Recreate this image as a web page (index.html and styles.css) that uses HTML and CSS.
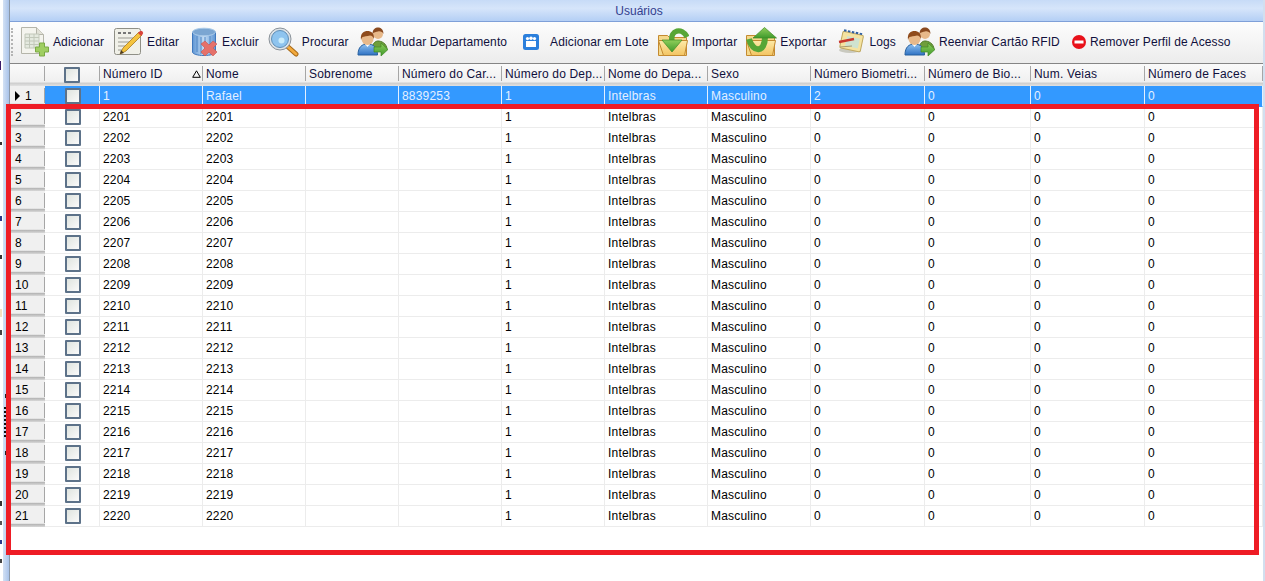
FILE: index.html
```html
<!DOCTYPE html>
<html lang="en">
<head>
    <meta charset="UTF-8">
    <meta name="viewport" content="width=device-width, initial-scale=1.0">
    <title>Usuários</title>
    <link rel="stylesheet" href="styles.css">
</head>
<body>
    <svg class="iconDefs" width="0" height="0">
        <defs>
            <linearGradient id="gradFolder" x1="0" y1="0" x2="0" y2="1"><stop offset="0" stop-color="#fdeaa8"/><stop offset="1" stop-color="#f3c462"/></linearGradient>
            <linearGradient id="gradGreen" x1="0" y1="0" x2="0" y2="1"><stop offset="0" stop-color="#8fce5a"/><stop offset="1" stop-color="#3f9a2c"/></linearGradient>
            <linearGradient id="gradBlue" x1="0" y1="0" x2="1" y2="0"><stop offset="0" stop-color="#5f96d4"/><stop offset=".5" stop-color="#c3dcf4"/><stop offset="1" stop-color="#5f96d4"/></linearGradient>
            <linearGradient id="gradShirt" x1="0" y1="0" x2="0" y2="1"><stop offset="0" stop-color="#8fc1ef"/><stop offset="1" stop-color="#2f72c4"/></linearGradient>
            <symbol id="iconUsers" viewBox="0 0 32 32">
                <path d="M15 24c0-6 3-9 6-9s9 2 9 9z" fill="#6f9e3c" stroke="#4d7a25"/>
                <circle cx="21" cy="8" r="5" fill="#e8b98a"/>
                <path d="M15.500 8c0-5 3-6.500 5.500-6.500s5.500 1.500 5.500 6.500c-1-2-3-3-5.500-2.500-2 .500-4 .500-5.500 2.500z" fill="#8a4a20"/>
                <path d="M1 29c0-8 4-11 9.500-11s10 3 10 11z" fill="url(#gradShirt)" stroke="#27609f"/>
                <path d="M8 18l2.500 3 2.500-3z" fill="#fff"/>
                <circle cx="10.500" cy="13" r="6" fill="#e8b98a"/>
                <path d="M4 14c-1-7 3-9 6.500-9s7 2 6.500 8c-1-2-2-3.500-4-3.500-3 .500-6 1-7.500 1.500-.8.800-1.200 2-1.500 3z" fill="#8f4b1c"/>
                <path d="M17 21h7v-4l7 6.500-7 6.500v-4h-7z" fill="url(#gradGreen)" stroke="#3f8a24" stroke-width=".7"/>
            </symbol>
        </defs>
    </svg>

    <div class="desktop">
        <div class="sideStrip"></div>
        <div class="window">
            <div class="titleBar">Usuários</div>

            <div class="toolbar">
                <span class="grip"></span>
                <div class="toolButton">
                    <svg class="icon" viewBox="0 0 32 32">
                        <path d="M3.500 1.500h15l7 7v19h-22z" fill="#f4f4ee" stroke="#b5b5aa"/>
                        <path d="M18.500 1.500v7h7" fill="#e2e2d8" stroke="#b5b5aa"/>
                        <path d="M7 8h14v14H7z" fill="#e4e9df" stroke="#c2c8ba"/>
                        <path d="M7 11.500h14M7 15h14M7 18.500h14M11.500 8v14M16 8v14" stroke="#c2c8ba" fill="none"/>
                        <path d="M21.500 17h5v4h4v5h-4v4h-5v-4h-4v-5h4z" fill="#9fce62" stroke="#7aa944"/>
                    </svg>
                    <span>Adicionar</span>
                </div>
                <div class="toolButton">
                    <svg class="icon" viewBox="0 0 32 32">
                        <rect x="2.500" y="2.500" width="26" height="26" rx="2" fill="#f0f0e8" stroke="#8f8f86"/>
                        <path d="M6 7h3M11 7h3M16 7h3" stroke="#777" stroke-width="2" fill="none"/>
                        <path d="M6 12h15M6 16h12M6 20h8M6 24h5" stroke="#9a9a92" fill="none"/>
                        <path d="M27 6l3 3-16 16-6 3 3-6z" fill="#f4c33c" stroke="#a87a1c" stroke-width=".8"/>
                        <path d="M26 7l3 3 1.500-1.500a2 2 0 0 0-3-3z" fill="#d8443c"/>
                        <path d="M8 28l1-4 3 3z" fill="#4a3a22"/>
                    </svg>
                    <span>Editar</span>
                </div>
                <div class="toolButton">
                    <svg class="icon" viewBox="0 0 32 32">
                        <path d="M5.500 6v20c0 2 5 3.500 11.500 3.500S28.500 28 28.500 26V6z" fill="url(#gradBlue)" stroke="#3f78bd"/>
                        <ellipse cx="17" cy="6" rx="11.500" ry="3.800" fill="#7ba6d2" stroke="#a9c9e8"/>
                        <path d="M10 10v16M14 11v17M18 11v17M23 10v16" stroke="#4f86c4" fill="none"/>
                        <path d="M18 15l4 4 4-4 4 3-4 4 4 4-4 4-4-4-4 4-4-4 4-4-4-4z" fill="#e5716a" stroke="#c9544e" stroke-width=".6"/>
                    </svg>
                    <span>Excluir</span>
                </div>
                <div class="toolButton">
                    <svg class="icon" viewBox="0 0 32 32">
                        <path d="M20 20l9 8" stroke="#a86a18" stroke-width="5" stroke-linecap="round" fill="none"/>
                        <path d="M20 20l9 8" stroke="#f2a93c" stroke-width="3" stroke-linecap="round" fill="none"/>
                        <circle cx="13" cy="13" r="11" fill="#dde3e8" stroke="#8a9299"/>
                        <circle cx="13" cy="13" r="8.500" fill="#8ec4ef" stroke="#5f8fb8"/>
                        <circle cx="14.500" cy="14.500" r="3" fill="#c9ecfb"/>
                    </svg>
                    <span>Procurar</span>
                </div>
                <div class="toolButton">
                    <svg class="icon"><use href="#iconUsers"/></svg>
                    <span>Mudar Departamento</span>
                </div>
                <div class="toolButton">
                    <svg class="icon" viewBox="0 0 32 32">
                        <rect x="8" y="8" width="16" height="16" rx="2.500" fill="#2b7fdc"/>
                        <rect x="11" y="15" width="10" height="6" fill="#fff"/>
                        <circle cx="12.500" cy="12.600" r="1.600" fill="#fff"/>
                        <circle cx="16" cy="12.300" r="1.800" fill="#fff"/>
                        <circle cx="19.500" cy="12.600" r="1.600" fill="#fff"/>
                    </svg>
                    <span>Adicionar em Lote</span>
                </div>
                <div class="toolButton">
                    <svg class="icon" viewBox="0 0 32 32">
                        <path d="M1.500 9.500h9l2 2h17v18h-28z" fill="#f5d88a" stroke="#c48a30"/>
                        <path d="M4 14h24v4H4z" fill="#fdf3d0"/>
                        <path d="M1.500 14.500l5 15h21l3-15z" fill="url(#gradFolder)" stroke="#c48a30"/>
                        <path d="M15 15C13 4 25 1 30 11" stroke="#57a636" stroke-width="5.500" fill="none"/>
                        <path d="M5 14h20L15 26z" fill="url(#gradGreen)" stroke="#3f8a24" stroke-width=".7"/>
                    </svg>
                    <span>Importar</span>
                </div>
                <div class="toolButton">
                    <svg class="icon" viewBox="0 0 32 32">
                        <path d="M1.500 9.500h9l2 2h17v18h-28z" fill="#f5d88a" stroke="#c48a30"/>
                        <path d="M1.500 14.500l5 15h21l3-15z" fill="url(#gradFolder)" stroke="#c48a30"/>
                        <path d="M20 11C20 27 8 27 4 13" stroke="#57a636" stroke-width="6" fill="none"/>
                        <path d="M8 12L19.500 1.500 31.500 12z" fill="url(#gradGreen)" stroke="#3f8a24" stroke-width=".7"/>
                    </svg>
                    <span>Exportar</span>
                </div>
                <div class="toolButton">
                    <svg class="icon" viewBox="0 0 32 32">
                        <ellipse cx="15" cy="24" rx="11" ry="3" fill="#c9c9bf"/>
                        <g transform="rotate(12 16 16)">
                            <rect x="6" y="7" width="21" height="17" rx="1.500" fill="#f5e3a0" stroke="#c0a860"/>
                            <rect x="11" y="11" width="13" height="10" fill="#cfe3d0"/>
                            <path d="M8 7v-2M12 7v-2M16 7v-2M20 7v-2M24 7v-2" stroke="#2f5f9f" stroke-width="2.500" fill="none"/>
                        </g>
                        <path d="M4 16l15-3" stroke="#c8382e" stroke-width="2.500" fill="none"/>
                        <path d="M5 21l12-1" stroke="#a89a70" fill="none"/>
                    </svg>
                    <span>Logs</span>
                </div>
                <div class="toolButton">
                    <svg class="icon"><use href="#iconUsers"/></svg>
                    <span>Reenviar Cartão RFID</span>
                </div>
                <div class="toolButton removeButton">
                    <svg class="iconSmall" viewBox="0 0 16 16">
                        <circle cx="8" cy="8" r="7" fill="#e8111a"/>
                        <rect x="3.500" y="6.500" width="9" height="3" fill="#fff"/>
                    </svg>
                    <span>Remover Perfil de Acesso</span>
                </div>
            </div>

            <table class="userTable">
                <colgroup>
                    <col class="colRow"><col class="colCheck"><col class="colWide"><col class="colWide"><col class="colCard"><col class="colWide"><col class="colWide"><col class="colWide"><col class="colWide"><col class="colBio"><col class="colBio2"><col class="colBio"><col>
                </colgroup>
                <thead>
                    <tr>
                        <th></th>
                        <th class="checkCell"><span class="checkBox"></span></th>
                        <th>Número ID<svg class="sortMark" viewBox="0 0 9 8"><path d="M4.500 .8L8.300 7.300H.7z" fill="none" stroke="#000"/></svg></th>
                        <th>Nome</th>
                        <th>Sobrenome</th>
                        <th>Número do Car...</th>
                        <th>Número do Dep...</th>
                        <th>Nome do Depa...</th>
                        <th>Sexo</th>
                        <th>Número Biometri...</th>
                        <th>Número de Bio...</th>
                        <th>Num. Veias</th>
                        <th>Número de Faces</th>
                    </tr>
                </thead>
                <tbody>
                    <tr class="selected"><th class="rowHead"><i class="rowArrow"></i>1</th><td class="checkCell"><span class="checkBox"></span></td><td>1</td><td>Rafael</td><td></td><td>8839253</td><td>1</td><td>Intelbras</td><td>Masculino</td><td>2</td><td>0</td><td>0</td><td>0</td></tr>
                    <tr><th class="rowHead">2</th><td class="checkCell"><span class="checkBox"></span></td><td>2201</td><td>2201</td><td></td><td></td><td>1</td><td>Intelbras</td><td>Masculino</td><td>0</td><td>0</td><td>0</td><td>0</td></tr>
                    <tr><th class="rowHead">3</th><td class="checkCell"><span class="checkBox"></span></td><td>2202</td><td>2202</td><td></td><td></td><td>1</td><td>Intelbras</td><td>Masculino</td><td>0</td><td>0</td><td>0</td><td>0</td></tr>
                    <tr><th class="rowHead">4</th><td class="checkCell"><span class="checkBox"></span></td><td>2203</td><td>2203</td><td></td><td></td><td>1</td><td>Intelbras</td><td>Masculino</td><td>0</td><td>0</td><td>0</td><td>0</td></tr>
                    <tr><th class="rowHead">5</th><td class="checkCell"><span class="checkBox"></span></td><td>2204</td><td>2204</td><td></td><td></td><td>1</td><td>Intelbras</td><td>Masculino</td><td>0</td><td>0</td><td>0</td><td>0</td></tr>
                    <tr><th class="rowHead">6</th><td class="checkCell"><span class="checkBox"></span></td><td>2205</td><td>2205</td><td></td><td></td><td>1</td><td>Intelbras</td><td>Masculino</td><td>0</td><td>0</td><td>0</td><td>0</td></tr>
                    <tr><th class="rowHead">7</th><td class="checkCell"><span class="checkBox"></span></td><td>2206</td><td>2206</td><td></td><td></td><td>1</td><td>Intelbras</td><td>Masculino</td><td>0</td><td>0</td><td>0</td><td>0</td></tr>
                    <tr><th class="rowHead">8</th><td class="checkCell"><span class="checkBox"></span></td><td>2207</td><td>2207</td><td></td><td></td><td>1</td><td>Intelbras</td><td>Masculino</td><td>0</td><td>0</td><td>0</td><td>0</td></tr>
                    <tr><th class="rowHead">9</th><td class="checkCell"><span class="checkBox"></span></td><td>2208</td><td>2208</td><td></td><td></td><td>1</td><td>Intelbras</td><td>Masculino</td><td>0</td><td>0</td><td>0</td><td>0</td></tr>
                    <tr><th class="rowHead">10</th><td class="checkCell"><span class="checkBox"></span></td><td>2209</td><td>2209</td><td></td><td></td><td>1</td><td>Intelbras</td><td>Masculino</td><td>0</td><td>0</td><td>0</td><td>0</td></tr>
                    <tr><th class="rowHead">11</th><td class="checkCell"><span class="checkBox"></span></td><td>2210</td><td>2210</td><td></td><td></td><td>1</td><td>Intelbras</td><td>Masculino</td><td>0</td><td>0</td><td>0</td><td>0</td></tr>
                    <tr><th class="rowHead">12</th><td class="checkCell"><span class="checkBox"></span></td><td>2211</td><td>2211</td><td></td><td></td><td>1</td><td>Intelbras</td><td>Masculino</td><td>0</td><td>0</td><td>0</td><td>0</td></tr>
                    <tr><th class="rowHead">13</th><td class="checkCell"><span class="checkBox"></span></td><td>2212</td><td>2212</td><td></td><td></td><td>1</td><td>Intelbras</td><td>Masculino</td><td>0</td><td>0</td><td>0</td><td>0</td></tr>
                    <tr><th class="rowHead">14</th><td class="checkCell"><span class="checkBox"></span></td><td>2213</td><td>2213</td><td></td><td></td><td>1</td><td>Intelbras</td><td>Masculino</td><td>0</td><td>0</td><td>0</td><td>0</td></tr>
                    <tr><th class="rowHead">15</th><td class="checkCell"><span class="checkBox"></span></td><td>2214</td><td>2214</td><td></td><td></td><td>1</td><td>Intelbras</td><td>Masculino</td><td>0</td><td>0</td><td>0</td><td>0</td></tr>
                    <tr><th class="rowHead">16</th><td class="checkCell"><span class="checkBox"></span></td><td>2215</td><td>2215</td><td></td><td></td><td>1</td><td>Intelbras</td><td>Masculino</td><td>0</td><td>0</td><td>0</td><td>0</td></tr>
                    <tr><th class="rowHead">17</th><td class="checkCell"><span class="checkBox"></span></td><td>2216</td><td>2216</td><td></td><td></td><td>1</td><td>Intelbras</td><td>Masculino</td><td>0</td><td>0</td><td>0</td><td>0</td></tr>
                    <tr><th class="rowHead">18</th><td class="checkCell"><span class="checkBox"></span></td><td>2217</td><td>2217</td><td></td><td></td><td>1</td><td>Intelbras</td><td>Masculino</td><td>0</td><td>0</td><td>0</td><td>0</td></tr>
                    <tr><th class="rowHead">19</th><td class="checkCell"><span class="checkBox"></span></td><td>2218</td><td>2218</td><td></td><td></td><td>1</td><td>Intelbras</td><td>Masculino</td><td>0</td><td>0</td><td>0</td><td>0</td></tr>
                    <tr><th class="rowHead">20</th><td class="checkCell"><span class="checkBox"></span></td><td>2219</td><td>2219</td><td></td><td></td><td>1</td><td>Intelbras</td><td>Masculino</td><td>0</td><td>0</td><td>0</td><td>0</td></tr>
                    <tr><th class="rowHead">21</th><td class="checkCell"><span class="checkBox"></span></td><td>2220</td><td>2220</td><td></td><td></td><td>1</td><td>Intelbras</td><td>Masculino</td><td>0</td><td>0</td><td>0</td><td>0</td></tr>
                </tbody>
            </table>
        </div>
        <div class="sideStripRight"></div>
    </div>

    <div class="sideMarks"></div>
    <div class="highlightBox"></div>
</body>
</html>
```

FILE: styles.css
```css
body {
    font-family: "Liberation Sans", Arial, sans-serif;
    font-size: 12px;
    margin: 0;
    background-color: #fff;
    color: #000;
    overflow: hidden;
}

.iconDefs {
    position: absolute;
}

.desktop {
    display: flex;
    height: 581px;
}

.sideStrip {
    width: 7px;
    margin-left: 3px;
    box-sizing: border-box;
    background: linear-gradient(to right, #d3e1f4, #a9c3ea);
    border-right: 1px solid #8b98a8;
}

.sideStripRight {
    flex: 1;
    background-color: #d2dfef;
}

/* bits of the window behind, cut off at the left edge */
.sideMarks {
    position: absolute;
    left: 0;
    top: 0;
    width: 8px;
    height: 581px;
    background:
        linear-gradient(#3a1a6a, #3a1a6a) 0 61px / 1px 9px,
        linear-gradient(#333, #333) 0 142px / 2px 3px,
        linear-gradient(#2a3a8a, #2a3a8a) 0 216px / 2px 5px,
        linear-gradient(#333, #333) 0 255px / 2px 4px,
        linear-gradient(#f3e2c0, #f3e2c0) 0 309px / 2px 8px,
        linear-gradient(#444, #444) 0 330px / 2px 5px,
        linear-gradient(#222, #222) 5px 394px / 2px 4px,
        repeating-linear-gradient(#111 0 2px, transparent 2px 4px) 4px 407px / 2px 32px,
        linear-gradient(#222, #222) 5px 451px / 2px 4px,
        linear-gradient(#333, #333) 0 501px / 2px 5px,
        linear-gradient(#555, #555) 0 521px / 2px 4px,
        linear-gradient(#2a3a8a, #2a3a8a) 0 540px / 2px 4px,
        linear-gradient(#444, #444) 0 559px / 2px 4px;
    background-repeat: no-repeat;
}

.window {
    width: 1253px;
    background-color: #fff;
}

.titleBar {
    height: 21px;
    line-height: 22px;
    padding-left: 5px;
    text-align: center;
    color: #33408f;
    background: linear-gradient(to bottom, #c7dbf7, #d6e5fa 40%, #b4cff5);
    border-bottom: 1px solid #7fa0d8;
}

.toolbar {
    display: flex;
    align-items: center;
    height: 40px;
    padding: 0 0 1px 1px;
    letter-spacing: .11px;
    background: linear-gradient(to bottom, #fdfdfd, #ececec);
    border-bottom: 1px solid #858585;
    color: #10103c;
}

.grip {
    height: 28px;
    margin-right: 5px;
    border-left: 2px dotted #b4b4b4;
}

.toolButton {
    display: flex;
    align-items: center;
    gap: 3px;
    margin-right: 8px;
    white-space: nowrap;
}

.removeButton {
    margin-left: 3px;
}

.icon {
    width: 32px;
    height: 32px;
}

.iconSmall {
    width: 16px;
    height: 16px;
}

.userTable {
    width: 1253px;
    table-layout: fixed;
    border-collapse: separate;
    border-spacing: 0;
}

.colRow { width: 35px; }
.colCheck { width: 55px; }
.colWide { width: 103px; }
.colCard { width: 93px; }
.colBio { width: 114px; }
.colBio2 { width: 106px; }

th,
td {
    box-sizing: border-box;
    padding: 0 0 0 3px;
    white-space: nowrap;
    overflow: hidden;
    font-weight: normal;
    text-align: left;
}

thead th {
    height: 22px;
    padding-bottom: 3px;
    letter-spacing: .18px;
    color: #10103c;
    background:
        linear-gradient(#a6a6a6, #a6a6a6) right 2px no-repeat,
        linear-gradient(to bottom, #fafafa, #f0f0f0 80%, #cfcfcf 88%, #e2e2e2);
    background-size: 1px 15px, auto;
}

tbody td {
    height: 21px;
    letter-spacing: .2px;
    border-right: 1px solid #ececec;
    border-bottom: 1px solid #ececec;
}

.rowHead {
    height: 21px;
    padding: 0 0 1px 5px;
    background:
        linear-gradient(#a6a6a6, #a6a6a6) right 2px no-repeat,
        linear-gradient(to bottom, #f0f0f0, #f0f0f0 82%, #b8b8b8 88%, #d8d8d8);
    background-size: 1px 15px, auto;
}

.checkCell {
    padding: 0;
    text-align: center;
}

thead .checkCell {
    padding-right: 1px;
}

tbody .checkCell {
    padding-left: 1px;
}

.checkBox {
    display: inline-block;
    width: 16px;
    height: 16px;
    box-sizing: border-box;
    vertical-align: middle;
    border: 2px solid #5d7289;
    border-radius: 1px;
    background: linear-gradient(135deg, #dfe4df, #fafafa);
}

.sortMark {
    float: right;
    width: 9px;
    height: 8px;
    margin: 3px 2px 0 0;
}

.selected td {
    color: #e4f0ff;
    background-color: #3399ff;
    border-right-color: #e4f0ff;
    border-bottom-color: #3399ff;
}

.rowArrow {
    display: inline-block;
    margin: 0 5px 0 0;
    border-left: 5px solid #000;
    border-top: 5px solid transparent;
    border-bottom: 5px solid transparent;
    vertical-align: -1px;
}

.highlightBox {
    position: absolute;
    left: 6px;
    top: 104px;
    width: 1243px;
    height: 441px;
    border: 5px solid #ee1c25;
}
```
